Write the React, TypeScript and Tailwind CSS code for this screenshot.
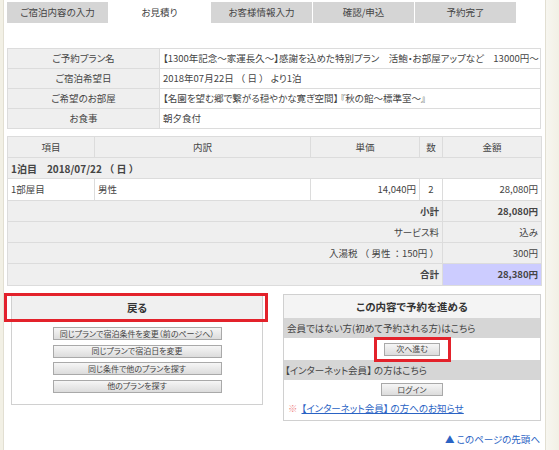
import React from "react";

const tabs = [
  { label: "ご宿泊内容の入力", active: false },
  { label: "お見積り", active: true },
  { label: "お客様情報入力", active: false },
  { label: "確認/申込", active: false },
  { label: "予約完了", active: false },
];

// full-width brackets keep their natural width (no palt) as in the original page
const Wide = ({ children }: { children: React.ReactNode }) => (
  <span className="[font-feature-settings:normal]">{children}</span>
);

const planRows = [
  { label: "ご予約プラン名", value: <>【1300年記念～家運長久～】感謝を込めた特別プラン　活鮑・お部屋アップなど　13000円～</> },
  { label: "ご宿泊希望日", value: <>2018年07月22日 <Wide>（ 日 ）</Wide> より1泊</> },
  { label: "ご希望のお部屋", value: <>【名園を望む郷で繋がる穏やかな寛ぎ空間】 『秋の館～標準室～』</> },
  { label: "お食事", value: <>朝夕食付</> },
];

const backButtons = [
  "同じプランで宿泊条件を変更（前のページへ）",
  "同じプランで宿泊日を変更",
  "同じ条件で他のプランを探す",
  "他のプランを探す",
];

const GrayButton = ({ label, className }: { label: string; className: string }) => (
  <button className={`block border border-[#a9a9a9] bg-gradient-to-b from-[#f6f6f6] to-[#dcdcdc] text-[8px] leading-none text-[#444] ${className}`}>
    {label}
  </button>
);

export default function App() {
  return (
    <div
      className="flex w-[559px] h-[450px] overflow-hidden bg-[#f2f0e5] text-[#444] [font-feature-settings:'palt']"
      style={{ fontFamily: '"Noto Sans CJK JP", "Noto Sans", sans-serif' }}
    >
      <div className="w-[4px] border-r border-[#e2dfd2]" />
      <div className="w-[541px] bg-white pl-[3px] pr-[4px] text-[9.5px]">
        {/* step tabs */}
        <div className="flex gap-[1px] mt-[2px]">
          {tabs.map((tab) => (
            <div
              key={tab.label}
              className={`w-[101px] h-[21px] flex items-center justify-center ${tab.active ? "bg-white" : "bg-[#d5d5d5]"}`}
            >
              {tab.label}
            </div>
          ))}
        </div>

        {/* plan summary */}
        <table className="w-[534px] mt-[25px] border-collapse border border-[#dcdcdc]">
          <tbody>
            {planRows.map((row) => (
              <tr key={row.label} className="h-[20px]">
                <td className="w-[152px] bg-[#efefef] border border-[#dcdcdc] text-center">{row.label}</td>
                <td className="border border-[#dcdcdc] pl-[3px] whitespace-nowrap">{row.value}</td>
              </tr>
            ))}
          </tbody>
        </table>

        {/* price details */}
        <table className="w-[534px] mt-[7px] border-collapse border border-[#dcdcdc] table-fixed">
          <colgroup>
            <col className="w-[87px]" />
            <col className="w-[216px]" />
            <col className="w-[109px]" />
            <col className="w-[23px]" />
            <col className="w-[99px]" />
          </colgroup>
          <tbody>
            <tr className="h-[21px] bg-[#efefef]">
              <td className="border border-[#dcdcdc] text-center">項目</td>
              <td className="border border-[#dcdcdc] text-center">内訳</td>
              <td className="border border-[#dcdcdc] text-center">単価</td>
              <td className="border border-[#dcdcdc] text-center">数</td>
              <td className="border border-[#dcdcdc] text-center">金額</td>
            </tr>
            <tr className="h-[21px] bg-[#efefef]">
              <td colSpan={5} className="border border-[#dcdcdc] pl-[3px] font-bold text-[10px]">
                1泊目　2018/07/22 <Wide>（ 日 ）</Wide>
              </td>
            </tr>
            <tr className="h-[22px] bg-white">
              <td className="border border-[#dcdcdc] pl-[3px]">1部屋目</td>
              <td className="border border-[#dcdcdc] pl-[3px]">男性</td>
              <td className="border border-[#dcdcdc] text-right pr-[3px]">14,040円</td>
              <td className="border border-[#dcdcdc] text-center">2</td>
              <td className="border border-[#dcdcdc] text-right pr-[3px]">28,080円</td>
            </tr>
            <tr className="h-[21px] bg-[#efefef]">
              <td colSpan={4} className="border border-[#dcdcdc] text-right pr-[3px] font-bold">小計</td>
              <td className="border border-[#dcdcdc] text-right pr-[3px] font-bold">28,080円</td>
            </tr>
            <tr className="h-[21px] bg-[#efefef]">
              <td colSpan={4} className="border border-[#dcdcdc] text-right pr-[3px]">サービス料</td>
              <td className="border border-[#dcdcdc] text-right pr-[3px]">込み</td>
            </tr>
            <tr className="h-[21px] bg-[#efefef]">
              <td colSpan={4} className="border border-[#dcdcdc] text-right pr-[3px]">
                入湯税 <Wide>（</Wide> 男性 <Wide>：</Wide>150円 <Wide>）</Wide>
              </td>
              <td className="border border-[#dcdcdc] text-right pr-[3px]">300円</td>
            </tr>
            <tr className="h-[22px] bg-[#efefef]">
              <td colSpan={4} className="border border-[#dcdcdc] text-right pr-[3px] font-bold">合計</td>
              <td className="border border-[#dcdcdc] text-right pr-[3px] font-bold bg-[#ccccff]">28,380円</td>
            </tr>
          </tbody>
        </table>

        {/* actions */}
        <div className="flex mt-[8px] items-start">
          <div className="relative ml-[4px] w-[252px] border border-[#d0d0d0] pb-[11px]">
            <div className="h-[25px] bg-[#f0f0f0] flex items-center justify-center font-bold text-[10.5px] text-[#333]">戻る</div>
            <div className="absolute left-[-8px] top-[-2px] w-[264px] h-[29px] border-[3px] border-[#e3222b]" />
            <div className="flex flex-col items-center gap-[4.5px] mt-[7px]">
              {backButtons.map((b) => (
                <GrayButton key={b} label={b} className="w-[169px] h-[13px]" />
              ))}
            </div>
          </div>

          <div className="ml-[20px] w-[258px] border border-[#d0d0d0]">
            <div className="h-[23px] bg-[#f4f4f4] flex items-center justify-center font-bold text-[10.5px] text-[#333]">
              この内容で予約を進める
            </div>
            <div className="h-[20px] bg-[#d6d6d6] flex items-center pl-[3px]">会員ではない方(初めて予約される方)はこちら</div>
            <div className="h-[22px] flex items-center justify-center">
              <div className="relative">
                <GrayButton label="次へ進む" className="w-[56px] h-[13px]" />
                <div className="absolute left-[-10px] top-[-6px] w-[77px] h-[25px] border-[3px] border-[#e3222b]" />
              </div>
            </div>
            <div className="h-[20px] bg-[#d6d6d6] flex items-center pl-[1px]">【インターネット会員】 の方はこちら</div>
            <div className="h-[19px] flex items-center justify-center">
              <GrayButton label="ログイン" className="w-[62px] h-[13px]" />
            </div>
            <div className="h-[21px] flex items-start pt-[2px] pl-[4px]">
              <span className="text-[#f08a8a] mr-[4px]">※</span>
              <a className="text-[#2a63c4] underline">【インターネット会員】 の方へのお知らせ</a>
            </div>
          </div>
        </div>

        <div className="flex justify-end mt-[11px] pr-[1px] text-[#2a63c4]">
          <a>▲ このページの先頭へ</a>
        </div>
      </div>
      <div className="flex-1 border-l border-[#e2dfd2] bg-gradient-to-r from-[#f7f6f0] to-[#f2f0e5]" />
    </div>
  );
}
